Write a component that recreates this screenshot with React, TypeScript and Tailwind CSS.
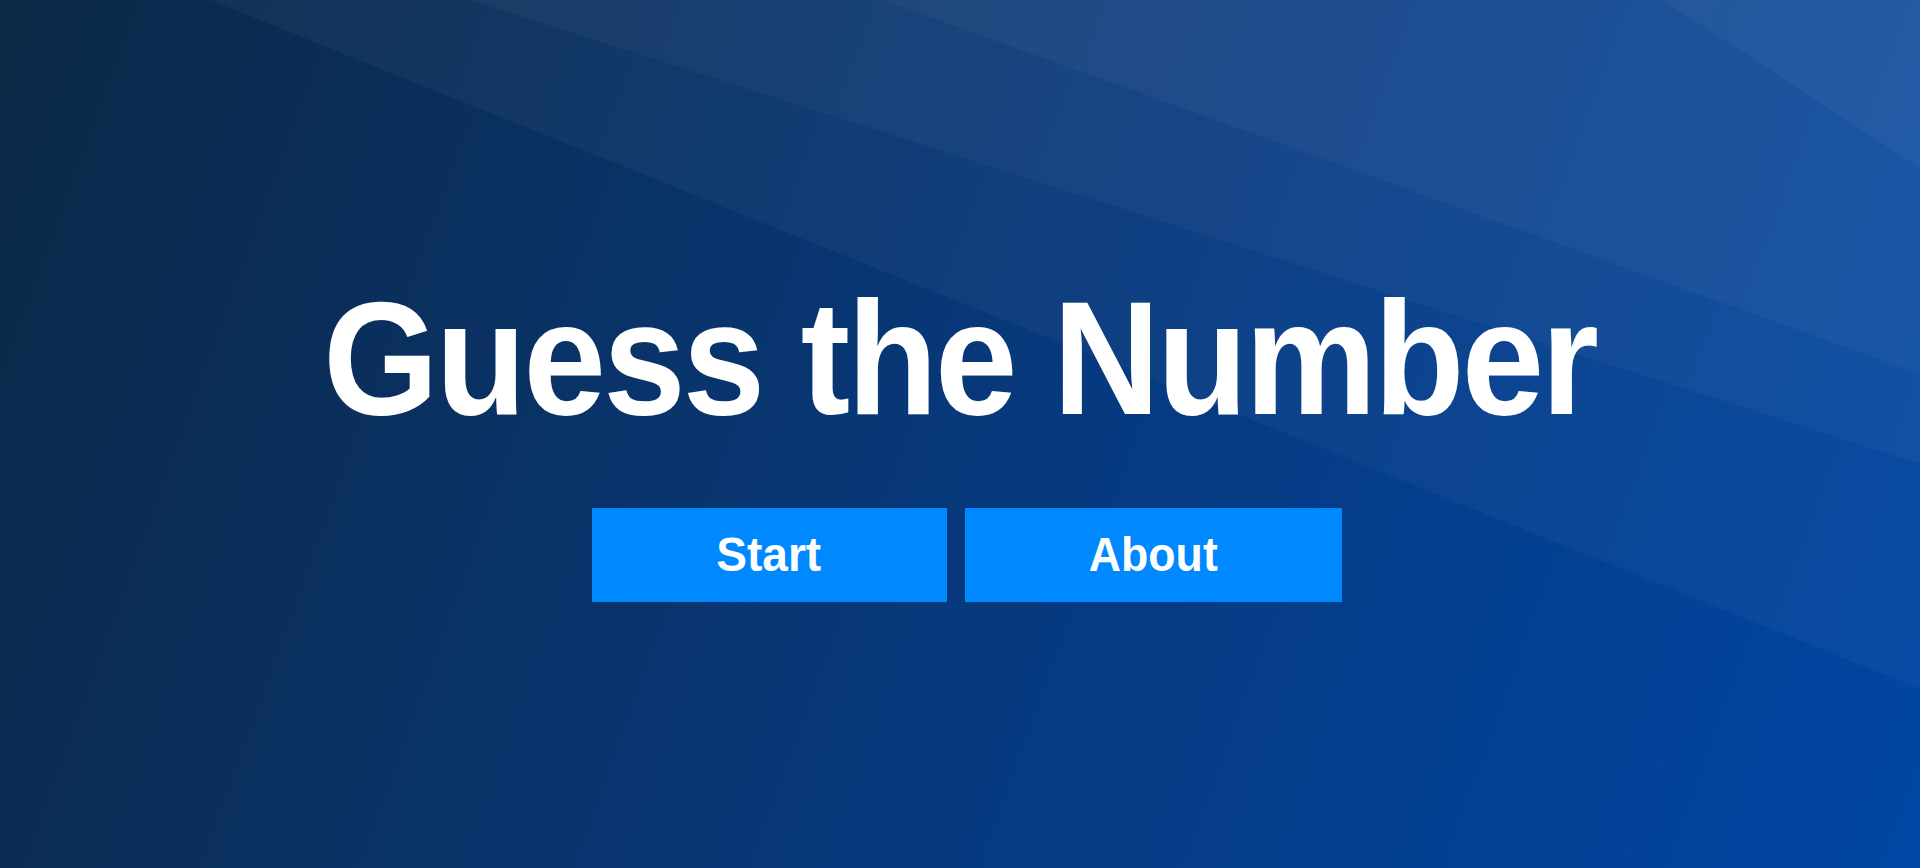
import { useState } from 'react'

/* Tela inicial do jogo */

const bands = [
  // faixas claras no canto superior direito
  '210,0 1920,0 1920,689',
  '470,0 1920,0 1920,464',
  '882,0 1920,0 1920,374',
  '1663,0 1920,0 1920,168',
]

export default function App() {
  const [screen, setScreen] = useState('home')

  return (
    <div className="relative h-screen w-full overflow-hidden bg-linear-110 from-[#0c2846] via-[#07387a] to-[#0046a4] font-['Liberation_Sans',Arial,sans-serif]">
      <svg className="absolute inset-0 h-full w-full" viewBox="0 0 1920 868" preserveAspectRatio="none" aria-hidden="true">
        {bands.map((p) => (
          <polygon key={p} points={p} fill="#ffffff" fillOpacity="0.035" />
        ))}
      </svg>

      <div className="relative flex h-full flex-col items-center justify-center pt-[2px]">
        <h1 className="scale-x-[0.92] text-[161px] font-bold leading-[180px] tracking-[-3px] text-white">Guess the Number</h1>

        <div className="mt-[60px] ml-[13px] flex gap-[18px]">
          <button
            className="h-[94px] w-[355px] bg-[#0088ff] text-[48px] font-bold text-white"
            onClick={() => setScreen('game')}
          >
            <span className="inline-block scale-x-[0.96]">Start</span>
          </button>
          <button
            className="h-[94px] w-[377px] bg-[#0088ff] text-[48px] font-bold text-white"
            onClick={() => setScreen('about')}
          >
            <span className="inline-block scale-x-[0.93]">About</span>
          </button>
        </div>
        {screen !== 'home' && <span className="sr-only">{screen}</span>}
      </div>
    </div>
  )
}
